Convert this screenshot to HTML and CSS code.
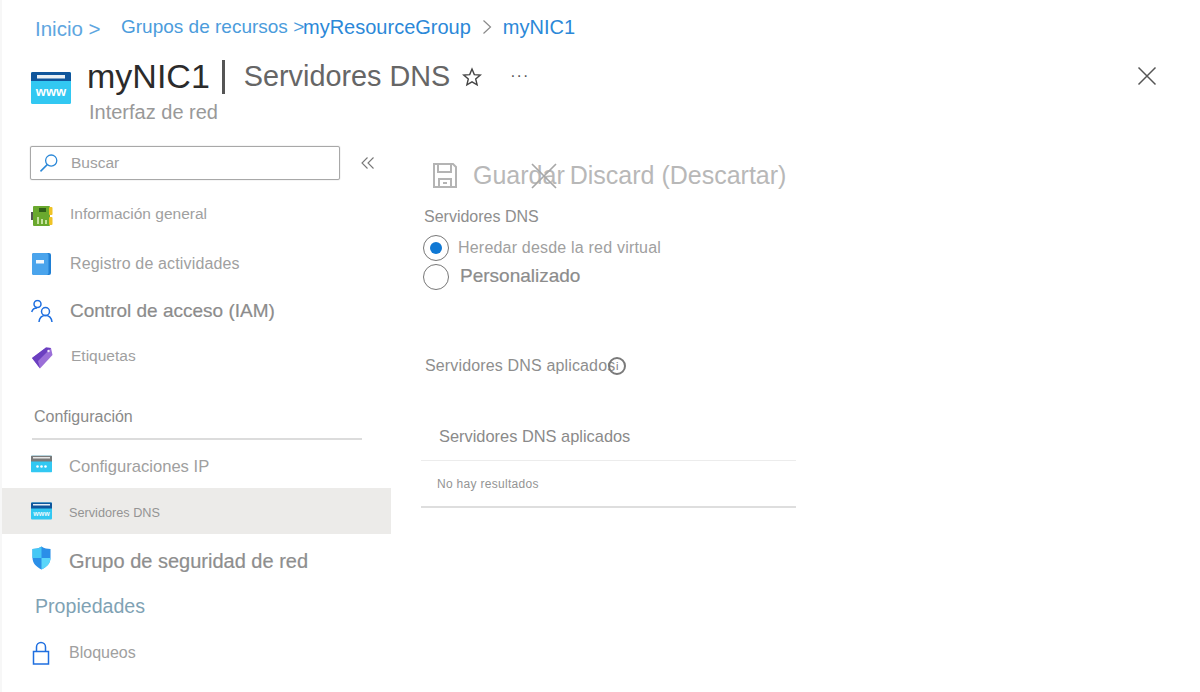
FILE: index.html
```html
<!DOCTYPE html>
<html lang="es">
<head>
    <meta charset="UTF-8">
    <meta name="viewport" content="width=device-width, initial-scale=1.0">
    <title>Servidores DNS</title>
    <link rel="stylesheet" href="styles.css">
</head>
<body>
    <div class="page">
        <nav class="breadcrumb">
            <span class="crumb-home">Inicio &gt;</span>
            <span class="crumb-group">Grupos de recursos &gt;</span>
            <span class="crumb-link">myResourceGroup</span>
            <svg class="crumb-sep" width="10" height="16" viewBox="0 0 10 16"><path d="M1.5 1.5 8.5 8l-7 6.5" fill="none" stroke="#8a8a8a" stroke-width="1.2"/></svg>
            <span class="crumb-link">myNIC1</span>
        </nav>

        <header class="title-bar">
            <svg class="title-icon" width="40" height="32" viewBox="0 0 40 32">
                <rect width="40" height="32" rx="1.5" fill="#32c8f2"/>
                <path d="M0 1.5A1.5 1.5 0 0 1 1.5 0h37A1.5 1.5 0 0 1 40 1.5V9H0z" fill="#0f569c"/>
                <rect x="6" y="3" width="28" height="3.5" fill="#e8f0f6"/>
                <text x="20" y="24" class="www-text">www</text>
            </svg>
            <div class="title-text">
                <div class="title-line">
                    <h1 class="title-name">myNIC1</h1>
                    <span class="title-bar-sep"></span>
                    <h2 class="title-page">Servidores DNS</h2>
                    <svg class="title-star" width="20" height="20" viewBox="0 0 20 20"><path d="m10 2 2.3 5.6 6 .5-4.6 3.9 1.4 5.9-5.1-3.1-5.1 3.1 1.4-5.9-4.6-3.9 6-.5z" fill="none" stroke="#444" stroke-width="1.4"/></svg>
                    <span class="title-more">···</span>
                </div>
                <div class="title-sub">Interfaz de red</div>
            </div>
            <svg class="title-close" width="20" height="20" viewBox="0 0 20 20"><path d="m1.5 1.5 17 17m0-17-17 17" stroke="#555" stroke-width="1.5" fill="none"/></svg>
        </header>

        <div class="main">
            <aside class="sidebar">
                <div class="search-row">
                    <div class="search-box">
                        <svg width="20" height="20" viewBox="0 0 20 20"><circle cx="12.2" cy="7.6" r="5.6" fill="none" stroke="#2b88d8" stroke-width="1.3"/><path d="M8.2 11.6 1.5 18.4" stroke="#2b88d8" stroke-width="1.5"/></svg>
                        <span>Buscar</span>
                    </div>
                    <svg class="collapse" width="14" height="14" viewBox="0 0 14 14"><path d="M6.5 1.5 1 7l5.5 5.5M12.5 1.5 7 7l5.500 5.500" fill="none" stroke="#777" stroke-width="1.1"/></svg>
                </div>

                <a class="nav-row row-info">
                    <svg class="nav-icon" width="22" height="20" viewBox="0 0 22 20">
                        <rect x="0" y="6" width="3" height="8" fill="#555"/>
                        <rect x="2" y="0" width="17" height="20" rx="1" fill="#6aa92e"/>
                        <rect x="18" y="1" width="3.500" height="8" rx="1" fill="#efc326"/>
                        <rect x="18" y="11" width="3.500" height="8" rx="1" fill="#efc326"/>
                        <rect x="8" y="2" width="7" height="4" fill="#2f5f18"/>
                        <path d="M6 18v-7h2v7zm4 0v-5h2v5zm4 0v-4h2v4z" fill="#c5e29e"/>
                    </svg>
                    <span>Información general</span>
                </a>
                <a class="nav-row row-log">
                    <svg class="nav-icon icon-inset" width="19" height="22" viewBox="0 0 19 22">
                        <rect width="19" height="22" rx="2" fill="#1f7fd4"/>
                        <rect width="16.500" height="22" rx="2" fill="#4aa4ec"/>
                        <rect x="4" y="7" width="8" height="3.500" fill="#f2f8fd"/>
                    </svg>
                    <span>Registro de actividades</span>
                </a>
                <a class="nav-row row-iam">
                    <svg class="nav-icon" width="23" height="23" viewBox="0 0 23 23">
                        <g fill="none" stroke="#1f6fe0" stroke-width="1.500">
                            <circle cx="6.500" cy="4.500" r="3.500"/>
                            <path d="M.7 12.500C1.500 9.700 3.500 8.500 6 8.500"/>
                            <circle cx="14.500" cy="12" r="4"/>
                            <path d="M8 22.500c.4-4 3-6.500 6.500-6.500s6 2.500 6.500 6.500"/>
                        </g>
                    </svg>
                    <span>Control de acceso (IAM)</span>
                </a>
                <a class="nav-row row-tags">
                    <svg class="nav-icon icon-inset" width="21" height="22" viewBox="0 0 21 22">
                        <path d="M0 11 14 .5 19 1l1.500 7L8 21.500z" fill="#9b6fd8"/>
                        <path d="M0 11 14 .5 19 1 6 14l2 7.500z" fill="#6b3fc0"/>
                        <circle cx="16.500" cy="4" r="1.200" fill="#efe6fa"/>
                    </svg>
                    <span>Etiquetas</span>
                </a>

                <div class="nav-section">Configuración</div>

                <a class="nav-row row-ip">
                    <svg class="nav-icon" width="21" height="17" viewBox="0 0 21 17">
                        <rect width="21" height="17" rx="1" fill="#32c8f2"/>
                        <path d="M0 1a1 1 0 0 1 1-1h19a1 1 0 0 1 1 1v5H0z" fill="#7a7a7a"/>
                        <rect x="2" y="1.500" width="17" height="1.500" fill="#e6e6e6"/>
                        <circle cx="6.500" cy="11" r="1.300" fill="#fff"/><circle cx="10.500" cy="11" r="1.300" fill="#fff"/><circle cx="14.500" cy="11" r="1.300" fill="#fff"/>
                    </svg>
                    <span>Configuraciones IP</span>
                </a>
                <a class="nav-row row-dns">
                    <svg class="nav-icon" width="21" height="18" viewBox="0 0 21 17">
                        <rect width="21" height="17" rx="1" fill="#32c8f2"/>
                        <path d="M0 1a1 1 0 0 1 1-1h19a1 1 0 0 1 1 1v5H0z" fill="#0f569c"/>
                        <rect x="2" y="1.500" width="17" height="1.500" fill="#e6eef5"/>
                        <text x="10.500" y="13" class="www-small">www</text>
                    </svg>
                    <span>Servidores DNS</span>
                </a>
                <a class="nav-row row-nsg">
                    <svg class="nav-icon icon-inset" width="19" height="24" viewBox="0 0 20 24">
                        <path d="M10 0c3 2 6 2.500 9.500 2.500v9c0 6-4 10-9.500 12.500C4.500 21.500.5 17.500.5 11.500v-9C4 2.500 7 2 10 0z" fill="#2b8fe8"/>
                        <path d="M10 0v12H.5v-9.500C4 2.500 7 2 10 0z" fill="#45c8f5"/>
                        <path d="M10 12h9.500c0 6-4 9.500-9.500 12z" fill="#5ad6fa"/>
                    </svg>
                    <span>Grupo de seguridad de red</span>
                </a>
                <div class="nav-heading">Propiedades</div>
                <a class="nav-row row-lock">
                    <svg class="nav-icon icon-inset" width="18" height="24" viewBox="0 0 18 24">
                        <path d="M1.500 10.500h15v12.500h-15z" fill="none" stroke="#1f6fe0" stroke-width="1.500"/>
                        <path d="M4.500 10.500V6a4.500 4.500 0 0 1 9 0v4.500" fill="none" stroke="#1f6fe0" stroke-width="1.500"/>
                    </svg>
                    <span>Bloqueos</span>
                </a>
            </aside>

            <section class="content">
                <div class="toolbar">
                    <svg class="save-icon" width="24" height="25" viewBox="0 0 24 25">
                        <g fill="none" stroke="#b4b4b4" stroke-width="2">
                            <path d="M1 1h19l3 3v20H1z"/>
                            <path d="M5 1v8h13V1"/>
                            <path d="M6 24v-8h12v8"/>
                            <path d="M10 20h4"/>
                        </g>
                    </svg>
                    <span class="tool-save">Guardar</span>
                    <svg class="discard-icon" width="26" height="26" viewBox="0 0 26 26"><path d="m1 1 24 24M25 1 1 25" stroke="#a8a8a8" stroke-width="1.700" fill="none"/></svg>
                    <span class="tool-discard">Discard (Descartar)</span>
                </div>

                <div class="field-label">Servidores DNS</div>
                <label class="radio-row row-inherit">
                    <span class="radio radio-on"></span>
                    <span>Heredar desde la red virtual</span>
                </label>
                <label class="radio-row row-custom">
                    <span class="radio"></span>
                    <span>Personalizado</span>
                </label>

                <div class="applied-label">
                    <span>Servidores DNS aplicados</span>
                    <span class="info-dot">i</span>
                </div>

                <div class="applied-table">
                    <div class="table-head">Servidores DNS aplicados</div>
                    <div class="table-empty">No hay resultados</div>
                </div>
            </section>
        </div>
    </div>
</body>
</html>
```

FILE: styles.css
```css
html, body {
    margin: 0;
    padding: 0;
    background: #fff;
    height: 100%;
    overflow: hidden;
}

body {
    font-family: "Liberation Sans", Arial, sans-serif;
}

.page {
    width: 1200px;
    height: 692px;
    box-sizing: border-box;
    border-left: 2px solid #f7f7f7;
    overflow: hidden;
}

/* migas */
.breadcrumb {
    display: flex;
    align-items: center;
    height: 56px;
    padding-left: 33px;
    box-sizing: border-box;
    padding-bottom: 2px;
}

.crumb-home {
    font-size: 20.5px;
    width: 86px;
    padding-top: 3px;
    white-space: nowrap;
    color: #5ea6e0;
}

.crumb-group {
    font-size: 19px;
    width: 182px;
    white-space: nowrap;
    color: #4b9cdc;
}

.crumb-link {
    font-size: 20px;
    color: #2b88d8;
}

.crumb-sep {
    margin: 0 11px 0 11px;
}

/* titulo */
.title-bar {
    display: flex;
    align-items: flex-start;
    height: 76px;
    padding-left: 29px;
}

.title-icon {
    margin-top: 16px;
    margin-right: 16px;
}

.title-text {
    flex: 1;
}

.title-line {
    display: flex;
    align-items: center;
    height: 40px;
}

.title-name {
    margin: 0;
    font-size: 34px;
    font-weight: normal;
    color: #2b2b2b;
}

.title-bar-sep {
    width: 3px;
    height: 34px;
    background: #555;
    margin: 2px 19px 0 12px;
}

.title-page {
    margin: 0;
    font-size: 28.800px;
    font-weight: normal;
    color: #666;
}

.title-star {
    margin-left: 12px;
    margin-top: 2px;
}

.title-more {
    margin-left: 28px;
    font-size: 16px;
    color: #555;
    letter-spacing: 1px;
}

.title-sub {
    font-size: 20px;
    color: #999;
    margin-top: 5px;
    padding-left: 2px;
}

.title-close {
    margin-top: 10px;
    margin-right: 43px;
}

.www-text {
    font-size: 13px;
    font-weight: bold;
    fill: #fff;
    text-anchor: middle;
}

.www-small {
    font-size: 7px;
    font-weight: bold;
    fill: #e8f8fe;
    text-anchor: middle;
}

/* cuerpo */
.main {
    display: flex;
}

.sidebar {
    width: 389px;
    flex: none;
    padding-top: 14px;
}

.search-row {
    display: flex;
    align-items: center;
    padding-left: 28px;
    height: 34px;
    margin-bottom: 11px;
}

.search-box {
    width: 310px;
    height: 34px;
    box-sizing: border-box;
    border: 1px solid #a8a8a8;
    border-radius: 2px;
    display: flex;
    align-items: center;
    padding: 0 0 1px 8px;
    font-size: 15.5px;
    color: #a0a0a0;
    box-shadow: 0 0 1px #999;
}

.search-box span {
    margin-left: 12px;
}

.collapse {
    margin-left: 21px;
}

.nav-row {
    display: flex;
    align-items: center;
    position: relative;
    box-sizing: border-box;
    padding-left: 68px;
    color: #a0a0a0;
    font-size: 16px;
    white-space: nowrap;
}

.nav-icon {
    position: absolute;
    left: 29px;
    top: 50%;
    transform: translateY(-50%);
}

.icon-inset {
    left: 30px;
}

.row-info { height: 49px; padding-bottom: 3px; font-size: 15.500px; }
.row-log { height: 48px; letter-spacing: 0.15px; }

.row-iam {
    height: 46px;
    font-size: 19px;
    color: #8c8c8c;
    -webkit-text-stroke: 0.2px #8c8c8c;
}

.row-tags { height: 47px; padding-left: 69px; padding-bottom: 3px; font-size: 15.500px; }

.nav-section {
    margin-left: 30px;
    width: 330px;
    height: 59px;
    box-sizing: border-box;
    padding: 27px 0 0 2px;
    border-bottom: 2px solid #dcdcdc;
    font-size: 16px;
    color: #8a8a8a;
}

.row-ip {
    height: 48px;
    padding: 6px 0 0 67px;
    font-size: 16.600px;
}

.row-dns {
    height: 46px;
    background: #ecebe9;
    font-size: 12.700px;
    padding: 4px 0 0 67px;
    color: #949494;
}

.row-nsg {
    height: 54px;
    font-size: 20px;
    padding-left: 67px;
    color: #8e8e8e;
    -webkit-text-stroke: 0.2px #8e8e8e;
}

.row-nsg .nav-icon {
    top: calc(50% - 3px);
}

.nav-heading {
    height: 36px;
    line-height: 36px;
    padding-left: 33px;
    font-size: 19.600px;
    color: #7fa2b4;
}

.row-lock { height: 58px; padding-left: 67px; }

/* contenido */
.content {
    flex: 1;
    color: #a0a0a0;
    padding-left: 30px;
}

.toolbar {
    display: flex;
    align-items: center;
    height: 36px;
    margin-top: 25px;
    padding-left: 12px;
    font-size: 25px;
    color: #b8b8b8;
}

.tool-save {
    margin-left: 16px;
}

.discard-icon {
    margin-left: -34px;
    margin-top: 2px;
}

.tool-discard {
    margin-left: 13px;
}

.field-label {
    margin-top: 15px;
    padding-left: 3px;
    font-size: 16px;
    color: #8e8e8e;
}

.radio-row {
    display: flex;
    align-items: center;
}

.radio {
    width: 26px;
    height: 26px;
    border: 1px solid #777;
    border-radius: 50%;
    box-sizing: border-box;
    display: flex;
    align-items: center;
    justify-content: center;
    flex: none;
    margin-left: 2px;
}

.radio-on::after {
    content: '';
    width: 12px;
    height: 12px;
    border-radius: 50%;
    background: #0f78d4;
}

.row-inherit {
    margin-top: 9px;
    height: 26px;
    font-size: 16px;
}

.row-inherit .radio + span {
    margin-left: 9px;
    letter-spacing: 0.2px;
}

.row-custom {
    margin-top: 3px;
    height: 26px;
    font-size: 19px;
    color: #8c8c8c;
    -webkit-text-stroke: 0.2px #8c8c8c;
}

.row-custom .radio + span {
    margin: 0 0 2px 11px;
}

.applied-label {
    display: flex;
    align-items: center;
    margin-top: 65px;
    padding-left: 4px;
    font-size: 16px;
    letter-spacing: 0.15px;
    color: #8e8e8e;
    height: 22px;
}

.info-dot {
    width: 18px;
    height: 18px;
    margin-left: -7px;
    border: 2px solid #7a7a7a;
    border-radius: 50%;
    box-sizing: border-box;
    font-size: 11px;
    line-height: 14px;
    text-align: center;
    color: #7a7a7a;
}

.applied-table {
    width: 375px;
    margin-top: 40px;
    border-bottom: 2px solid #dedede;
}

.table-head {
    height: 43px;
    line-height: 38px;
    padding-left: 18px;
    font-size: 16.400px;
    color: #8a8a8a;
    border-bottom: 1px solid #ececec;
}

.table-empty {
    height: 45px;
    line-height: 47px;
    padding-left: 16px;
    font-size: 12px;
    letter-spacing: 0.3px;
    color: #949494;
}
```
